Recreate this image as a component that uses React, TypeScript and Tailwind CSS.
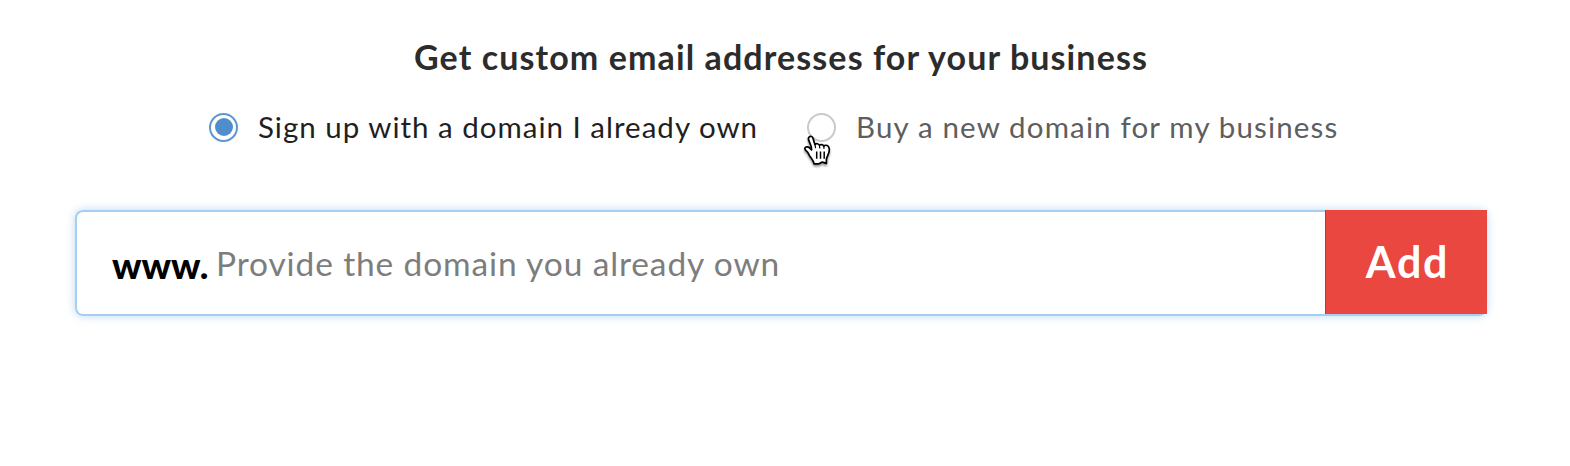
import { useState } from 'react';

type Mode = 'own' | 'buy';

const OPTIONS: { id: Mode; label: string; className: string }[] = [
  { id: 'own', label: 'Sign up with a domain I already own', className: 'w-[549px] text-[#1f1f1f] tracking-[1px]' },
  { id: 'buy', label: 'Buy a new domain for my business', className: 'w-[500px] text-[#5e5e5e] tracking-[1.16px]' },
];

function HandCursor() {
  return (
    <svg
      viewBox="0 0 28 32"
      className="absolute left-[-4px] top-[27px] h-8 w-7 drop-shadow-[0_2px_1px_rgba(0,0,0,0.4)]"
      aria-hidden="true"
    >
      <path
        d="M6.3 2.9C7.6 1.9 9.4 2.5 9.9 4L11.9 10.4C13.2 9.3 15.7 9.5 16.4 11.2C17.8 10.1 20.1 10.4 20.8 12.1C21.6 11.2 23.7 11.1 24.8 11.8C26.6 13.2 26.5 16.4 25.7 19C24.9 21.6 23.5 23.3 23.4 25.5V29.3C21.3 28.9 20.6 28.2 19.4 28.2C17.7 28.2 17.1 29.8 15.3 29.8H11.1C10.6 26.8 8.4 24.4 6.7 21.9C5.6 20.2 5.4 18.6 3.3 16.9C2 15.8 1.4 14.4 2.3 13.5C3.5 12.3 5.8 12.9 7.1 14.3L8.6 15.9L8.2 12.5L5.6 5.9C5.2 4.7 5.3 3.7 6.3 2.9Z"
        fill="white"
        stroke="black"
        strokeWidth="1.7"
        strokeLinejoin="round"
      />
      <path
        d="M12 10.4L12.5 13.6M16.4 11.2L16.8 14M20.8 12.1L21 14.4"
        stroke="black"
        strokeWidth="1.2"
        strokeLinecap="round"
      />
      <path d="M13.7 17.6V24.8M17.5 17.6V24.8M21.2 17.6V24.8" stroke="black" strokeWidth="1.5" />
    </svg>
  );
}

export default function App() {
  const [mode, setMode] = useState<Mode>('own');
  const [domain, setDomain] = useState('');

  return (
    <main className="h-[466px] w-[1570px] overflow-hidden bg-white pt-[37px] font-['Lato',sans-serif]">
      <h1 className="ml-[414px] h-10 whitespace-nowrap text-[34px] font-bold leading-10 tracking-[1.1px] text-[#2c2c2c]">
        Get custom email addresses for your business
      </h1>

      {/* Domain source */}
      <div className="ml-[209px] mt-[30px] flex h-10 items-center" role="radiogroup">
        {OPTIONS.map((option) => (
          <label key={option.id} className="relative flex h-10 cursor-pointer items-center">
            <input
              type="radio"
              name="mode"
              className="sr-only"
              checked={mode === option.id}
              onChange={() => setMode(option.id)}
            />
            <span
              className={`flex size-[29px] shrink-0 items-center justify-center rounded-full border-2 ${mode === option.id ? 'border-[#5c97d1]' : 'border-[#cacaca]'}`}
            >
              {mode === option.id && <span className="size-[18px] rounded-full bg-[#4f8ecb]" />}
            </span>
            <span className={`ml-5 whitespace-nowrap text-[29.5px] leading-10 ${option.className}`}>{option.label}</span>
            {option.id === 'buy' && <HandCursor />}
          </label>
        ))}
      </div>

      {/* Domain field */}
      <form
        className="ml-[75px] mt-[63px] flex h-[106px] w-[1412px] rounded-lg shadow-[0_0_8px_rgba(120,180,230,0.5)]"
        onSubmit={(e) => e.preventDefault()}
      >
        <div className="flex w-[1250px] items-center rounded-l-lg border-2 border-r-0 border-[#a6cef0] bg-white pl-[35px]">
          <span className="w-[104px] pt-1 text-[36.5px] font-black leading-10 text-black">www.</span>
          <input
            value={domain}
            onChange={(e) => setDomain(e.target.value)}
            placeholder="Provide the domain you already own"
            aria-label="Domain"
            className="h-12 flex-1 text-[33.5px] tracking-[0.87px] text-black outline-none placeholder:text-[#7d7d7d]"
          />
        </div>
        <div className="h-[106px] w-[162px] rounded-br-lg border-b-2 border-[#a6cef0]">
          <button
            type="submit"
            className="h-[104px] w-[162px] border-l border-[#dc2a24] bg-[#e94740] pl-0.5 text-[43px] font-bold tracking-[1.8px] text-white"
          >
            Add
          </button>
        </div>
      </form>
    </main>
  );
}
